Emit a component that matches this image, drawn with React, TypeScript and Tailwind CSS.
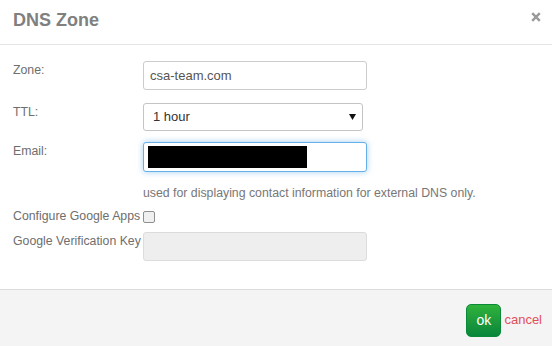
import { useState } from "react";

const font = { fontFamily: '"Liberation Sans", Arial, sans-serif' };

function CloseIcon() {
  return (
    <svg width="10" height="10" viewBox="0 0 10 10">
      <path d="M1.2 1.2 L8.8 8.8 M8.8 1.2 L1.2 8.8" stroke="#9a9a9a" strokeWidth="2.4" strokeLinecap="butt" />
    </svg>
  );
}

function Row({ label, children, className = "" }: { label: string; children: React.ReactNode; className?: string }) {
  return (
    <div className={`flex ${className}`}>
      <div className="w-[130px] shrink-0 whitespace-nowrap text-[12.3px] leading-[18px] text-[#6e6e6e]">{label}</div>
      <div>{children}</div>
    </div>
  );
}

export default function App() {
  const [zone, setZone] = useState("csa-team.com");
  const [ttl, setTtl] = useState("3600");
  const [google, setGoogle] = useState(false);

  return (
    <div className="w-[552px] h-[346px] bg-white flex flex-col overflow-hidden" style={font}>
      <header className="h-[45px] shrink-0 flex items-start justify-between border-b border-[#e5e5e5] pl-[13px] pr-[11px]">
        <h1 className="mt-[10px] text-[18px] leading-[20px] font-bold text-[#808080]">DNS Zone</h1>
        <button className="mt-[12px]">
          <CloseIcon />
        </button>
      </header>

      <div className="flex-1 flex flex-col pl-[13px] pt-[16px]">
        <Row label="Zone:">
          <input
            value={zone}
            onChange={(e) => setZone(e.target.value)}
            className="w-[224px] h-[29px] rounded-[3px] border border-[#cccccc] px-[6px] text-[13px] text-[#555] outline-none"
          />
        </Row>

        <Row label="TTL:" className="mt-[13px]">
          <div className="relative">
            <select
              value={ttl}
              onChange={(e) => setTtl(e.target.value)}
              className="appearance-none w-[220px] h-[28px] rounded-[3px] border border-[#c4c4c4] bg-white pl-[9px] text-[13px] text-[#333] outline-none"
            >
              <option value="3600">1 hour</option>
              <option value="86400">1 day</option>
            </select>
            <svg className="absolute right-[7px] top-[11px] pointer-events-none" width="7" height="6" viewBox="0 0 7 6">
              <path d="M0 0 H7 L3.5 6 Z" fill="#111" />
            </svg>
          </div>
        </Row>

        <Row label="Email:" className="mt-[11px]">
          <div className="w-[224px] h-[30px] rounded-[3px] border border-[#66afe9] shadow-[0_0_6px_rgba(102,175,233,0.6)] bg-white flex items-center pl-[4px]">
            <div className="w-[159px] h-[22px] bg-black" />
          </div>
        </Row>

        <p className="ml-[130px] mt-[13px] text-[12.3px] leading-[16px] text-[#777]">
          used for displaying contact information for external DNS only.
        </p>

        <div className="flex items-center mt-[8px] h-[14px]">
          <span className="w-[130px] shrink-0 whitespace-nowrap text-[12.3px] leading-[18px] text-[#6e6e6e]">Configure Google Apps</span>
          <input
            type="checkbox"
            checked={google}
            onChange={(e) => setGoogle(e.target.checked)}
            className="appearance-none w-[12px] h-[12px] rounded-[2px] border border-[#8f8f8f] bg-[#f0f0f0] mt-[1px]"
          />
        </div>

        <Row label="Google Verification Key" className="mt-[9px]">
          <input
            disabled
            className="w-[224px] h-[29px] rounded-[3px] border border-[#dcdcdc] bg-[#eeeeee] px-[6px] text-[13px]"
          />
        </Row>
      </div>

      <footer className="h-[57px] shrink-0 border-t border-[#dddddd] bg-[#f4f4f4] flex items-start justify-end pr-[10px]">
        <button className="mt-[14px] w-[35px] h-[33px] rounded-[5px] bg-gradient-to-b from-[#2fb33c] to-[#07853a] border border-[#0a8a38] text-white text-[14px]">
          ok
        </button>
        <a href="#" className="ml-[3px] mt-[22px] text-[13px] leading-[16px] text-[#e0505a]">
          cancel
        </a>
      </footer>
    </div>
  );
}
